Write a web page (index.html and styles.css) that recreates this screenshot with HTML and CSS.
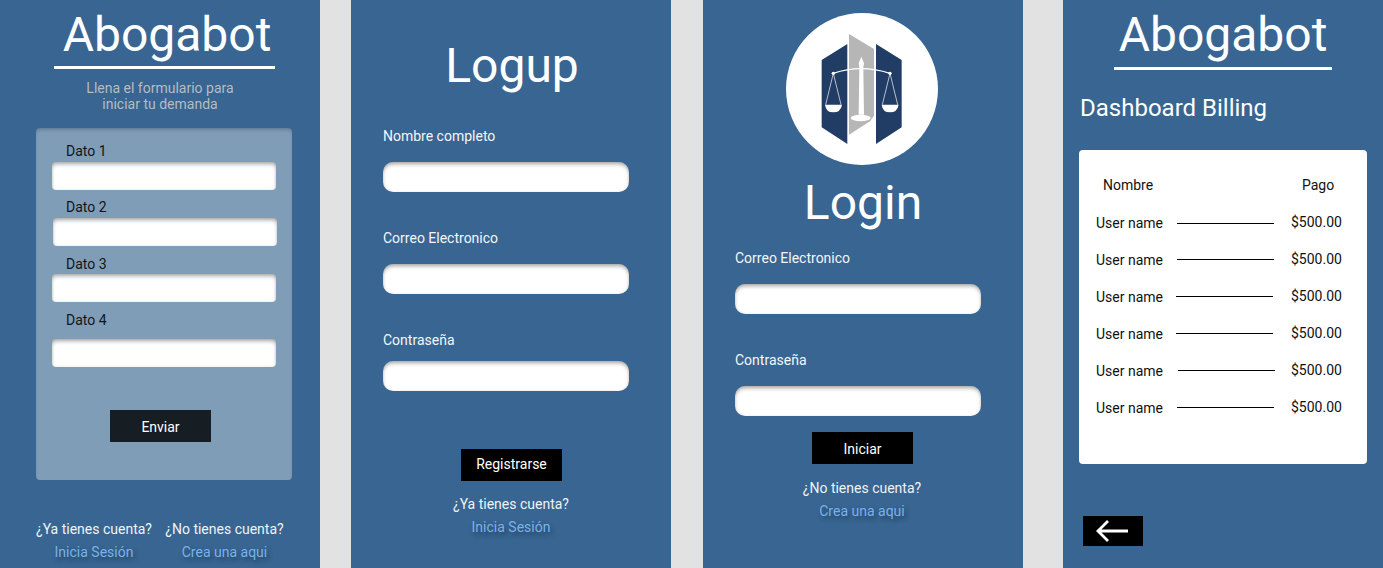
FILE: index.html
```html
<!DOCTYPE html>
<html lang="es">
<head>
<meta charset="utf-8">
<title>Abogabot</title>
<link rel="stylesheet" href="styles.css">
</head>
<body>
<main class="board">
  <section class="screen form-screen">
    <h1 class="brand brand-form">Abogabot</h1>
    <p class="intro">Llena el formulario para<br>iniciar tu demanda</p>
    <form class="card">
      <label class="dato">Dato 1</label>
      <div class="field small"></div>
      <label class="dato d2">Dato 2</label>
      <div class="field small nudge"></div>
      <label class="dato d3">Dato 3</label>
      <div class="field small f3"></div>
      <label class="dato d4">Dato 4</label>
      <div class="field small f4"></div>
      <button class="btn btn-dark" type="button">Enviar</button>
    </form>
    <div class="links-pair">
      <div class="link-col"><p class="ask">¿Ya tienes cuenta?</p><a class="link">Inicia Sesión</a></div>
      <div class="link-col"><p class="ask">¿No tienes cuenta?</p><a class="link">Crea una aqui</a></div>
    </div>
  </section>

  <section class="screen logup">
    <h1 class="big logup-title">Logup</h1>
    <label class="lbl l-first">Nombre completo</label>
    <div class="field wide"></div>
    <label class="lbl l-next">Correo Electronico</label>
    <div class="field wide"></div>
    <label class="lbl l-next">Contraseña</label>
    <div class="field wide f-pass"></div>
    <button class="btn btn-reg" type="button">Registrarse</button>
    <p class="ask center a-reg">¿Ya tienes cuenta?</p>
    <a class="link center">Inicia Sesión</a>
  </section>

  <section class="screen login">
    <svg class="logo" viewBox="48 37 456 456" aria-label="Logo de Abogabot">
      <circle cx="276" cy="265" r="228" fill="#fff"/>
      <polygon points="155,178 232,130 232,430 155,380" fill="#213d66"/>
      <polygon points="318,130 395,178 395,380 318,430" fill="#213d66"/>
      <polygon points="237,100 312,145 312,345 300,362 237,402" fill="#b6b6b6"/>
      <ellipse cx="272" cy="352" rx="30" ry="10" fill="#fff"/>
      <path d="M266 342 L268 200 L266 188 L274 168 L282 188 L280 200 L282 342 Z" fill="#fff"/>
      <path d="M190 218 Q272 190 360 218" fill="none" stroke="#fff" stroke-width="4"/>
      <circle cx="190" cy="218" r="5" fill="#fff"/>
      <circle cx="360" cy="218" r="5" fill="#fff"/>
      <path d="M190 218 L167 312 M190 218 L213 312 M360 218 L337 312 M360 218 L383 312" fill="none" stroke="#fff" stroke-width="2"/>
      <path d="M165 312 H216 Q212 335 190 335 Q168 335 165 312 Z" fill="#fff"/>
      <path d="M335 312 H386 Q382 335 360 335 Q338 335 335 312 Z" fill="#fff"/>
    </svg>
    <h1 class="big login-title">Login</h1>
    <label class="lbl l-login">Correo Electronico</label>
    <div class="field wide"></div>
    <label class="lbl l-next">Contraseña</label>
    <div class="field wide"></div>
    <button class="btn btn-login" type="button">Iniciar</button>
    <p class="ask center a-login">¿No tienes cuenta?</p>
    <a class="link center l-crea">Crea una aqui</a>
  </section>

  <section class="screen billing">
    <h1 class="brand brand-bill">Abogabot</h1>
    <h2 class="dash">Dashboard Billing</h2>
    <div class="table">
      <div class="thead"><span class="th-name">Nombre</span><span class="th-pay">Pago</span></div>
      <div class="row"><span class="user">User name</span><i class="line"></i><span class="amount">$500.00</span></div>
      <div class="row"><span class="user">User name</span><i class="line"></i><span class="amount">$500.00</span></div>
      <div class="row r-left"><span class="user">User name</span><i class="line"></i><span class="amount">$500.00</span></div>
      <div class="row r-left"><span class="user">User name</span><i class="line"></i><span class="amount">$500.00</span></div>
      <div class="row r-right"><span class="user">User name</span><i class="line"></i><span class="amount">$500.00</span></div>
      <div class="row"><span class="user">User name</span><i class="line"></i><span class="amount">$500.00</span></div>
    </div>
    <button class="back" type="button" aria-label="Volver">
      <svg width="32" height="24" viewBox="0 0 32 24"><path d="M32 12 H2 M12 2 L2 12 L12 22" fill="none" stroke="#fff" stroke-width="2.8"/></svg>
    </button>
  </section>
</main>
</body>
</html>
```
FILE: styles.css
```css
* { box-sizing: border-box; }
html, body { margin: 0; height: 568px; overflow: hidden; }
body { background: #e2e2e2; font-family: Roboto, "Liberation Sans", sans-serif; color: #fff; }
h1, h2, p { margin: 0; font-weight: 400; }
.board { display: flex; height: 568px; }
.screen { width: 320px; height: 568px; background: #386591; flex: none; display: flex; flex-direction: column; overflow: hidden; }
.logup { margin-left: 31px; padding: 0 32px; }
.login { margin-left: 32px; padding: 0 32px; }
.billing { margin-left: 40px; }

.brand { font-size: 48px; line-height: 56px; text-align: center; border-bottom: 3px solid #fff; }
.brand-form { width: 221px; margin: 7px 0 0 54px; padding: 0 0 3px 5px; height: 62px; }
.intro { margin-top: 11px; width: 320px; font-size: 14px; line-height: 16px; text-align: center; color: #b4bcc4; }

.card { margin: 16px 0 0 36px; width: 256px; height: 352px; background: #809db8; border-radius: 4px; box-shadow: inset 0 3px 4px -2px rgba(40,60,80,.45); padding-top: 15px; display: flex; flex-direction: column; }
.dato { color: #10151a; font-size: 14px; line-height: 17px; margin-left: 30px; }
.d2 { margin-top: 9px; }
.d3 { margin-top: 10px; }
.d4 { margin-top: 10px; }
.field { background: #fff; flex: none; box-shadow: inset 0 3px 4px -1px rgba(0,0,0,.35), inset 0 0 3px rgba(0,0,0,.1); }
.field.small { width: 224px; height: 28px; border-radius: 4px; margin: 2px 0 0 16px; }
.field.nudge { margin-left: 17px; }
.field.f3 { margin-top: 1px; }
.field.f4 { margin-top: 10px; }
.btn { display: block; border: 0; color: #fff; font: 14px/17px Roboto, "Liberation Sans", sans-serif; width: 101px; height: 32px; padding: 2px 0 0; background: #000; }
.btn-dark { background: #161d23; margin: 43px 0 0 74px; }

.links-pair { display: flex; margin: 41px 0 0 36px; }
.link-col { width: 129px; text-align: center; }
.link-col .ask, .link-col .link { width: 116px; }
.link-col + .link-col .ask, .link-col + .link-col .link { width: 119px; }
.ask { font-size: 14px; line-height: 17px; color: #f0f3f6; white-space: nowrap; }
.link { display: block; font-size: 14px; line-height: 17px; margin-top: 6px; color: #7ab2ec; text-shadow: 2px 3px 4px rgba(20,40,60,.55); white-space: nowrap; }
.center { width: 256px; text-align: center; }

.big { font-size: 48px; line-height: 56px; }
.logup-title { margin-top: 38px; width: 258px; text-align: center; }
.lbl { font-size: 14px; line-height: 17px; color: #f4f6f8; }
.l-first { margin-top: 34px; }
.l-next { margin-top: 38px; }
.field.wide { width: 246px; height: 30px; border-radius: 10px; margin-top: 17px; }
.field.f-pass { margin-top: 12px; }
.btn-reg { margin: 58px 0 0 78px; padding: 0 0 1px; }
.a-reg { margin-top: 15px; }

.logo { width: 152px; height: 152px; margin: 13px 0 0 51px; flex: none; }
.login-title { margin-top: 10px; width: 255px; text-align: center; padding-left: 1px; }
.l-login { margin-top: 19px; }
.btn-login { margin: 16px 0 0 77px; }
.a-login { margin-top: 16px; width: 254px; }
.l-crea { width: 254px; }

.brand-bill { width: 218px; margin: 7px 0 0 51px; height: 63px; padding: 0 0 3px; }
.dash { margin: 24px 0 0 17px; font-size: 24px; line-height: 28px; }
.table { margin: 28px 0 0 16px; width: 288px; height: 314px; background: #fff; border-radius: 4px; color: #111; padding-top: 27px; font-size: 14px; }
.thead { display: flex; height: 17px; line-height: 17px; }
.th-name { margin-left: 24px; width: 199px; }
.row { display: flex; align-items: center; height: 37px; line-height: 17px; }
.thead + .row { margin-top: 10px; }
.thead + .row .line { margin-top: 2px; }
.user { margin-left: 17px; width: 81px; position: relative; top: 1px; }
.line { display: block; height: 1px; background: #000; width: 97px; }
.amount { margin-left: 17px; }
.r-left .line { margin-left: -1px; }
.r-left .amount { margin-left: 18px; }
.r-right .line { margin-left: 1px; }
.r-right .amount { margin-left: 16px; }
.back { display: flex; align-items: center; justify-content: flex-start; margin: 52px 0 0 20px; width: 60px; height: 30px; background: #000; border: 0; padding: 0 0 0 13px; }
```
